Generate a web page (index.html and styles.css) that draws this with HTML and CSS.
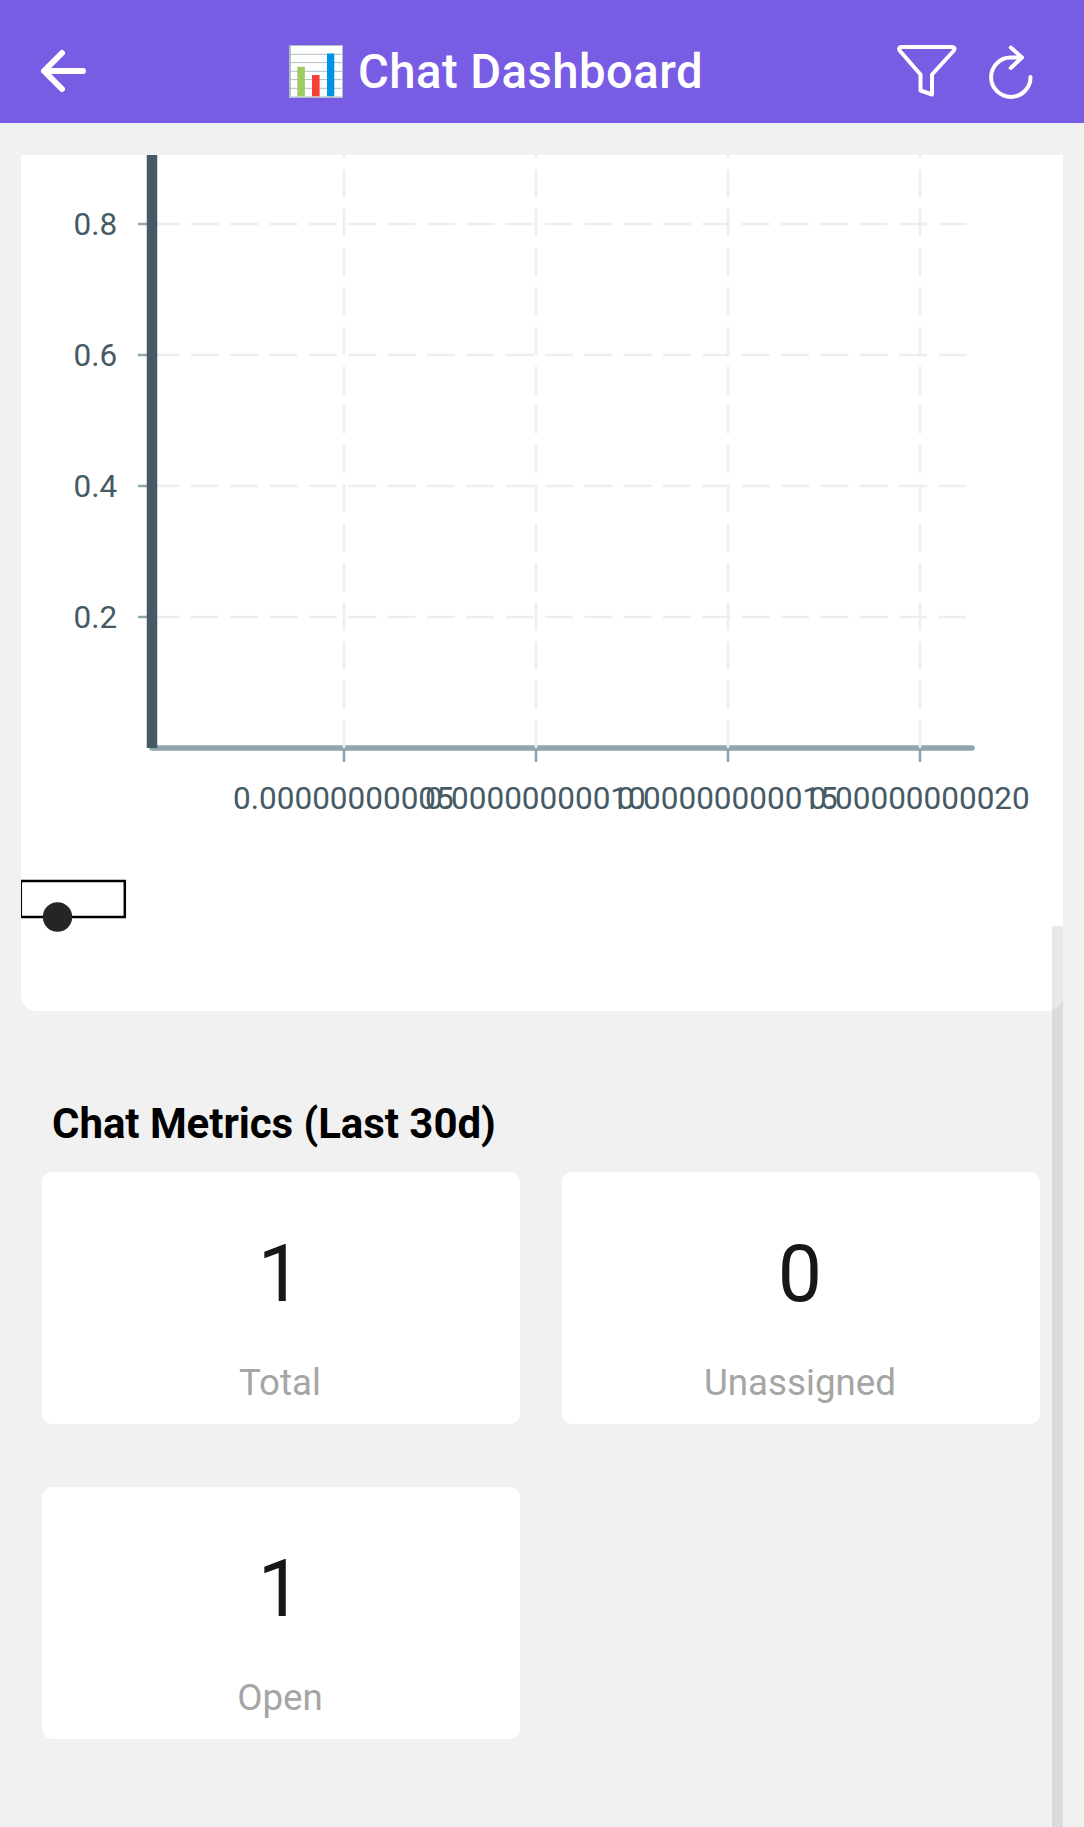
FILE: index.html
```
<!DOCTYPE html>
<html lang="en">
<head>
  <meta charset="UTF-8">
  <title>Chat Dashboard</title>
  <link rel="stylesheet" href="styles.css">
</head>
<body>

<header class="header">
  <svg class="back" viewBox="0 0 48 48">
    <path d="M23 6L5 24L23 42M6 24H44" />
  </svg>

  <div class="title">
    <svg class="title-icon" viewBox="0 0 54 53">
      <rect width="54" height="53" fill="#b0bec5" />
      <rect x="2" y="1" width="51" height="50.5" fill="#fff" />
      <path d="M2 9.3H53M2 17.6H53M2 26.3H53M2 34.6H53M2 43.3H53" stroke="#b0bec5" stroke-width="1" />
      <rect x="8.3" y="21.7" width="7.6" height="29.6" fill="#9ccc65" />
      <rect x="23" y="30" width="7.6" height="21.3" fill="#f44336" />
      <rect x="38" y="8.5" width="7.3" height="42.8" fill="#0091ea" />
    </svg>
    <h1>Chat Dashboard</h1>
  </div>

  <div class="actions">
    <svg class="filter" viewBox="0 0 60 52">
      <path d="M4 2H55.5Q59 2.5 56.5 6L35 29.5V49.5L23.5 45.5V29.5L3 6Q0.8 2.8 4 2Z" />
    </svg>
    <svg class="refresh" viewBox="0 0 44 54">
      <path d="M41.5 32A19.7 19.7 0 1 1 21.8 12.5H32M21.8 2.5L33 12.5L21.8 23" />
    </svg>
  </div>
</header>

<main class="content">
  <section class="chart-card">
    <svg class="chart" viewBox="21 155 1042 856">
      <g class="grid-h">
        <path d="M151.5 224H967M151.5 355H967M151.5 486H967M151.5 617H967" />
      </g>
      <line class="x-axis" x1="152" y1="748" x2="972" y2="748" />
      <g class="grid-v">
        <path d="M344 748.3V93M536 748.3V93M728 748.3V93M920 748.3V93" />
      </g>
      <path class="ticks" d="M138 224H152M138 355H152M138 486H152M138 617H152" />
      <path class="ticks" d="M344 748V762M536 748V762M728 748V762M920 748V762" />
      <line class="y-axis" x1="152" y1="155" x2="152" y2="748" />

      <g class="y-labels">
        <text x="117.3" y="235">0.8</text>
        <text x="117.3" y="366">0.6</text>
        <text x="117.3" y="497">0.4</text>
        <text x="117.3" y="628">0.2</text>
      </g>
      <g class="x-labels">
        <text x="343.4" y="809">0.00000000005</text>
        <text x="535.4" y="809">0.00000000010</text>
        <text x="727.4" y="809">0.00000000015</text>
        <text x="919.4" y="809">0.00000000020</text>
      </g>

      <!-- legend -->
      <rect class="legend-box" x="20.8" y="881" width="104" height="36" />
      <circle cx="57.5" cy="917" r="14.7" fill="#252525" />
    </svg>
  </section>

  <h2>Chat Metrics (Last 30d)</h2>

  <section class="metrics">
    <div class="metric">
      <div class="value">1</div>
      <div class="label">Total</div>
    </div>
    <div class="metric">
      <div class="value">0</div>
      <div class="label">Unassigned</div>
    </div>
    <div class="metric">
      <div class="value">1</div>
      <div class="label">Open</div>
    </div>
  </section>

  <div class="scrollbar"></div>
</main>

</body>
</html>
```
FILE: styles.css
```
* {
  box-sizing: border-box;
  margin: 0;
  padding: 0;
}

body {
  height: 1827px;
  overflow: hidden;
  background: #f1f1f1;
  font-family: Roboto, sans-serif;
}

svg {
  display: block;
}

/* Header */
.header {
  height: 123px;
  padding: 20px 51px 0 39px;
  display: flex;
  align-items: center;
  justify-content: space-between;
  background: #795ce4;
  color: #fff;
}

.back,
.filter,
.refresh {
  fill: none;
  stroke: #fff;
  stroke-width: 4;
  stroke-linecap: round;
  stroke-linejoin: round;
}

.back {
  width: 48px;
  height: 48px;
  margin-bottom: 2px;
  stroke-width: 6;
}

.title {
  display: flex;
  align-items: center;
  gap: 15px;
  padding-left: 8px;
}

.title-icon {
  width: 54px;
  height: 53px;
}

.title h1 {
  font-size: 47.25px;
  font-weight: 500;
  letter-spacing: 0.45px;
  line-height: 56px;
}

.actions {
  display: flex;
  gap: 32px;
}

.filter {
  width: 60px;
  height: 52px;
}

.refresh {
  width: 44px;
  height: 54px;
}

/* Chart */
.content {
  position: relative;
  height: 1704px;
  padding: 32px 21px 0;
}

.chart-card {
  height: 856px;
  background: #fff;
  border-radius: 0 0 16px 16px;
  overflow: hidden;
}

.chart {
  width: 1042px;
  height: 856px;
}

.grid-h path,
.grid-v path {
  fill: none;
  stroke: #eceff1;
  stroke-width: 2.6;
  stroke-dasharray: 28 11.35;
}

.ticks {
  fill: none;
  stroke: #90a4ae;
  stroke-width: 2.6;
}

.x-axis {
  stroke: #90a4ae;
  stroke-width: 5.5;
  stroke-linecap: round;
}

.y-axis {
  stroke: #455a64;
  stroke-width: 10.5;
}

.x-labels,
.y-labels {
  fill: #455a64;
  font-size: 31.5px;
}

.x-labels {
  text-anchor: middle;
}

.y-labels {
  text-anchor: end;
}

.legend-box {
  fill: none;
  stroke: #000;
  stroke-width: 2.5;
}

/* Metrics */
h2 {
  padding: 88px 31px 0;
  font-size: 42px;
  font-weight: 700;
  letter-spacing: -0.05px;
  line-height: 50px;
}

.metrics {
  display: grid;
  grid-template-columns: 478px 478px;
  gap: 63px 42px;
  padding: 23px 21px 0;
}

.metric {
  height: 252px;
  padding: 55px 2px 0 0;
  background: #fff;
  border-radius: 10px;
  text-align: center;
}

.value {
  color: #171717;
  font-size: 78.75px;
  line-height: 94px;
}

.label {
  margin-top: 40px;
  color: #a5a5a5;
  font-size: 36.75px;
  line-height: 44px;
}

.scrollbar {
  position: absolute;
  top: 803px;
  right: 21px;
  bottom: 0;
  width: 11px;
  background: rgba(0, 0, 0, 0.09);
}
```
